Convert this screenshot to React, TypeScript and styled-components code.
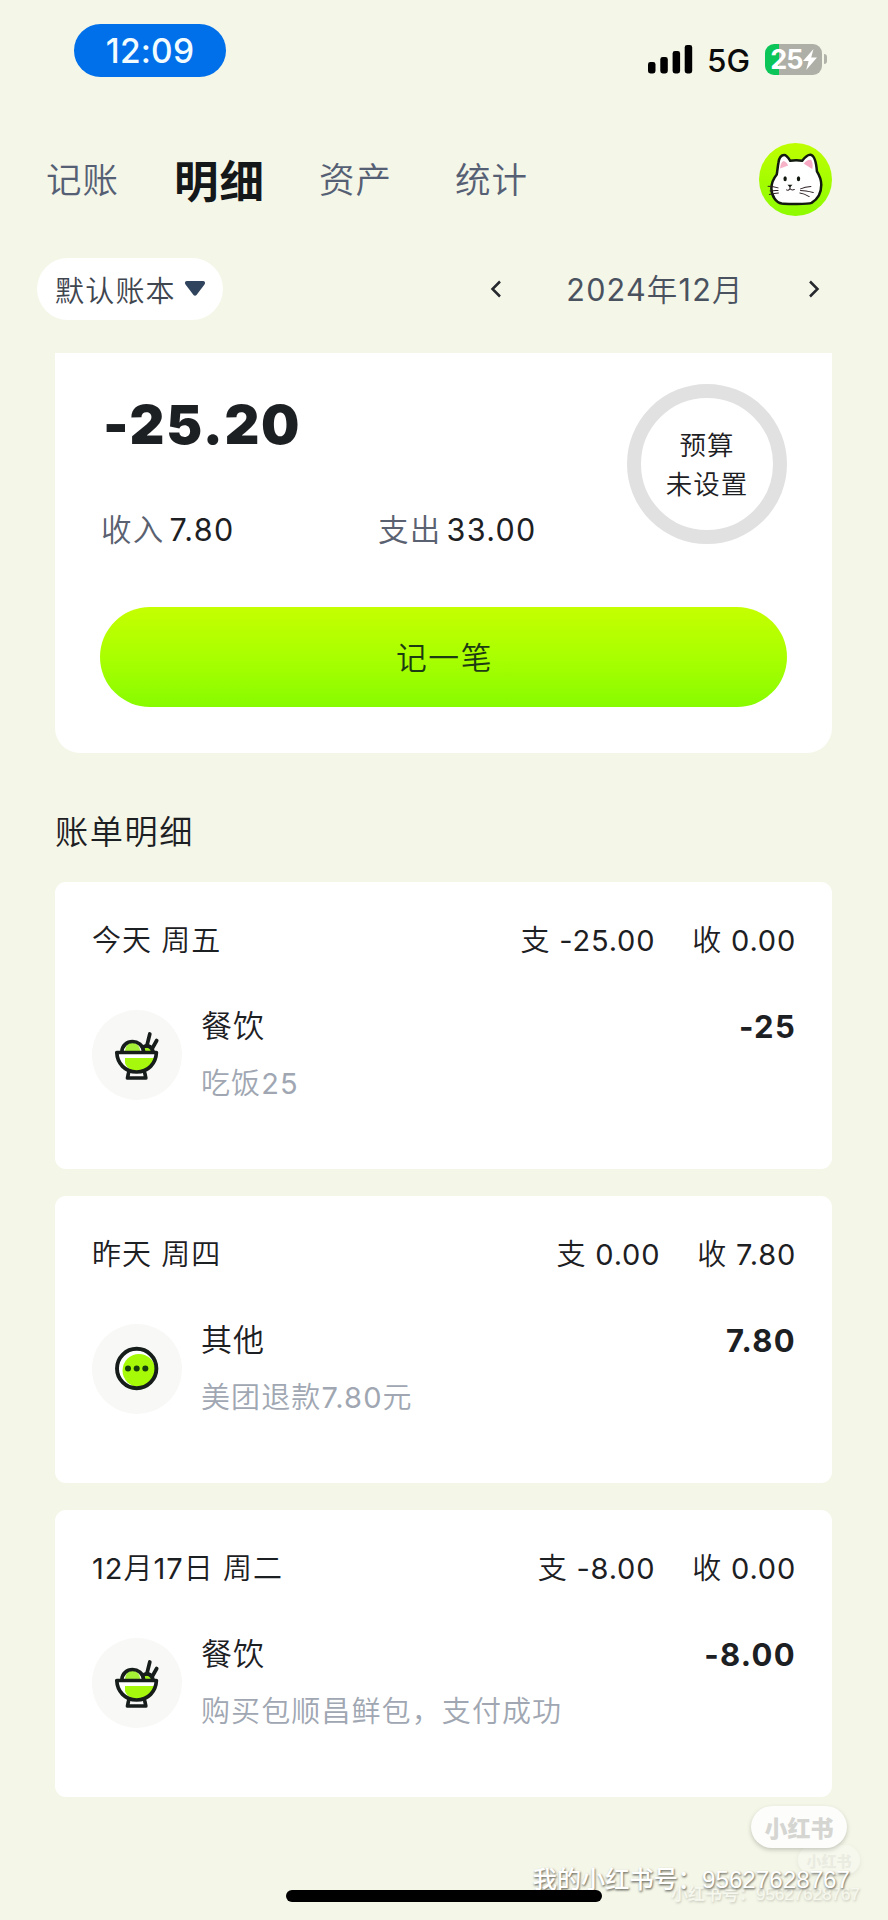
import React from "react";
import styled, { createGlobalStyle } from "styled-components";

const GlobalStyle = createGlobalStyle`
  *, *::before, *::after { box-sizing: border-box; }
  body {
    margin: 0;
    background: #f4f6e8;
    font-family: Inter, "Noto Sans CJK SC", sans-serif;
    color: #1d2023;
    -webkit-font-smoothing: antialiased;
  }
`;

const Screen = styled.div`
  position: relative;
  display: flex;
  flex-direction: column;
  width: 888px;
  height: 1920px;
  overflow: hidden;
  background: #f4f6e8;
`;

/* Latin figures are set one step heavier than the Chinese text around them. */
const Figure = styled.span`
  font-weight: 400;
`;

const Mixed = ({ children }: { children: string }) => (
  <>
    {children
      .split(/([-\d.]+)/)
      .filter(Boolean)
      .map((part, i) => (/^[-\d.]/.test(part) ? <Figure key={i}>{part}</Figure> : part))}
  </>
);

/* ---------- status bar ---------- */

const StatusBar = styled.header`
  display: flex;
  justify-content: space-between;
  align-items: flex-start;
  height: 143px;
  padding: 24px 61px 0 74px;
`;

const TimePill = styled.div`
  display: flex;
  align-items: center;
  justify-content: center;
  width: 152px;
  height: 53px;
  padding-top: 1px;
  border-radius: 27px;
  background: #0070ea;
  color: #f2fcff;
  font-size: 33.5px;
  font-weight: 500;
  letter-spacing: 0.2px;
`;

const StatusIcons = styled.div`
  display: flex;
  align-items: center;
  height: 32px;
  margin-top: 19px;
`;

const Network = styled.span`
  width: 57px;
  padding-left: 14px;
  padding-top: 3px;
  margin-right: 15px;
  color: #0b0b0b;
  font-size: 31.5px;
  font-weight: 500;
  line-height: 32px;
  white-space: nowrap;
`;

const Battery = styled.div`
  display: flex;
  align-items: center;
  gap: 2px;
`;

const BatteryBody = styled.div`
  display: flex;
  align-items: center;
  justify-content: center;
  width: 57px;
  height: 31px;
  border-radius: 9px;
  background: linear-gradient(90deg, #0bc558 0 14px, #aeafa7 14px);
  color: #fff;
  font-size: 27px;
  font-weight: 700;
  letter-spacing: -0.8px;
  line-height: 31px;
`;

const BatteryCap = styled.i`
  width: 3px;
  height: 10px;
  border-radius: 0 4px 4px 0;
  background: #b1b2aa;
`;

/* ---------- navigation ---------- */

const Nav = styled.nav`
  display: flex;
  align-items: center;
  height: 73px;
  padding: 0 56px 0 46px;
`;

const Tab = styled.a<{ $active?: boolean; $width: number }>`
  flex: 0 0 ${(p) => p.$width}px;
  padding-top: ${(p) => (p.$active ? 4 : 2)}px;
  color: ${(p) => (p.$active ? "#141819" : "#566074")};
  font-size: ${(p) => (p.$active ? 44.5 : 35.5)}px;
  font-weight: ${(p) => (p.$active ? 700 : 350)};
  letter-spacing: 1px;
  line-height: 72px;
  white-space: nowrap;
`;

const Avatar = styled.svg`
  width: 73px;
  height: 73px;
  margin-left: auto;
`;

const Filters = styled.div`
  display: flex;
  align-items: center;
  height: 62px;
  margin-top: 42px;
  padding: 0 68px 0 37px;
`;

const BookPicker = styled.button`
  display: flex;
  align-items: center;
  gap: 8px;
  width: 186px;
  height: 62px;
  padding: 0 0 1px 18px;
  border: 0;
  border-radius: 31px;
  background: #fff;
  color: #3f4650;
  font: inherit;
  font-size: 29px;
  font-weight: 350;
  letter-spacing: 1.2px;
  white-space: nowrap;
`;

const MonthSwitch = styled.div`
  display: flex;
  align-items: center;
  justify-content: space-between;
  width: 330px;
  margin-left: auto;
`;

const MonthLabel = styled.span`
  padding-bottom: 2px;
  color: #4a5260;
  font-size: 30.5px;
  font-weight: 350;
  letter-spacing: 1.2px;
  white-space: nowrap;
`;

/* ---------- summary ---------- */

const Summary = styled.section`
  height: 400px;
  margin: 33px 56px 0 55px;
  padding: 31px 45px 46px;
  border-radius: 0 0 25px 25px;
  background: #fff;
`;

const SummaryTop = styled.div`
  display: flex;
  justify-content: space-between;
  height: 223px;
`;

const Figures = styled.div`
  display: flex;
  flex-direction: column;
  padding-top: 14px;
`;

const Balance = styled.div`
  padding-left: 3px;
  font-size: 54px;
  font-weight: 900;
  letter-spacing: 1.6px;
  line-height: 54px;
`;

const Totals = styled.div`
  display: flex;
  margin-top: 53px;
  padding-left: 1px;
  line-height: 50px;
`;

const Total = styled.div<{ $width?: number }>`
  display: flex;
  width: ${(p) => (p.$width ? p.$width + "px" : "auto")};
  gap: 5px;
  font-size: 30.5px;
  font-weight: 350;
  letter-spacing: 1.3px;
  white-space: nowrap;
`;

const TotalLabel = styled.span`
  color: #5a6170;
`;

const BudgetRing = styled.div`
  display: flex;
  flex: none;
  flex-direction: column;
  align-items: center;
  justify-content: center;
  width: 160px;
  height: 160px;
  padding-top: 2px;
  border: 14px solid #e1e1e1;
  border-radius: 50%;
  font-size: 26.5px;
  font-weight: 350;
  letter-spacing: 1px;
  line-height: 39px;
  white-space: nowrap;
`;

const RecordButton = styled.button`
  display: block;
  width: 100%;
  height: 100px;
  padding: 0 0 3px 2px;
  border: 0;
  border-radius: 50px;
  background: linear-gradient(180deg, #c5ff00 0%, #a9ff00 50%, #88fb00 100%);
  color: #1c3b12;
  font: inherit;
  font-size: 30.8px;
  font-weight: 350;
  letter-spacing: 1.5px;
`;

/* ---------- records ---------- */

const SectionTitle = styled.h2`
  margin: 59px 0 30px 55px;
  font-size: 33.2px;
  font-weight: 350;
  letter-spacing: 1.6px;
  line-height: 40px;
`;

const RecordList = styled.main`
  display: flex;
  flex-direction: column;
  gap: 27px;
  margin: 0 56px 0 55px;
`;

const DayCard = styled.article`
  height: 287px;
  padding: 39px 36px 0 37px;
  border-radius: 11px;
  background: #fff;
`;

const DayHeader = styled.div`
  display: flex;
  justify-content: space-between;
  font-size: 29px;
  font-weight: 350;
  letter-spacing: 1px;
  line-height: 40px;
  white-space: nowrap;
`;

const DayTotals = styled.div`
  display: flex;
  gap: 37px;
  letter-spacing: 0.8px;
`;

const Entry = styled.div`
  display: flex;
  margin-top: 49px;
`;

const EntryIcon = styled.svg`
  flex: none;
  width: 90px;
  height: 90px;
  border-radius: 50%;
  background: #f8f9f6;
`;

const EntryText = styled.div`
  flex: 1;
  margin-left: 19px;
  margin-top: -4px;
`;

const EntryName = styled.div`
  font-size: 31px;
  font-weight: 350;
  letter-spacing: 0.9px;
  line-height: 40px;
`;

const EntryNote = styled.div`
  margin-top: 18px;
  color: #a0a7b2;
  font-size: 29px;
  font-weight: 350;
  letter-spacing: 1.1px;
  line-height: 40px;
`;

const Amount = styled.div`
  margin-top: -3px;
  font-size: 31px;
  font-weight: 700;
  letter-spacing: 1.3px;
  line-height: 40px;
`;

/* ---------- overlays ---------- */

const HomeIndicator = styled.div`
  position: absolute;
  left: 286px;
  bottom: 18px;
  width: 316px;
  height: 12px;
  border-radius: 6px;
  background: #000;
`;

const Watermark = styled.div<{ $faint?: boolean }>`
  position: absolute;
  right: ${(p) => (p.$faint ? 28 : 38)}px;
  bottom: ${(p) => (p.$faint ? 15 : 25)}px;
  display: flex;
  flex-direction: column;
  align-items: flex-end;
  opacity: ${(p) => (p.$faint ? 0.3 : 1)};
`;

const BrandPill = styled.div<{ $small?: boolean }>`
  display: flex;
  align-items: center;
  justify-content: center;
  width: ${(p) => (p.$small ? 62 : 96)}px;
  height: ${(p) => (p.$small ? 30 : 42)}px;
  margin-right: ${(p) => (p.$small ? 0 : 3)}px;
  border-radius: 21px;
  background: #fdfdfb;
  box-shadow: 0 2px 4px rgba(90, 90, 80, 0.3);
  color: #d5d5d2;
  font-size: ${(p) => (p.$small ? 15 : 23)}px;
  font-weight: 900;
`;

const BrandId = styled.div<{ $small?: boolean }>`
  margin-top: ${(p) => (p.$small ? 10 : 17)}px;
  color: #fff;
  font-family: "Liberation Sans", "Noto Sans CJK SC", sans-serif;
  font-size: ${(p) => (p.$small ? 17 : 24.2)}px;
  font-weight: 500;
  line-height: ${(p) => (p.$small ? 20 : 30)}px;
  text-shadow: 1px 1px 2px rgba(90, 90, 80, 0.75), 0 2px 2px rgba(90, 90, 80, 0.35);
  white-space: nowrap;
`;

/* ---------- drawings ---------- */

const SignalIcon = () => (
  <svg width="45" height="29" viewBox="0 0 45 29" fill="#000">
    <rect x="0" y="17" width="7.5" height="11.5" rx="2.4" />
    <rect x="12.3" y="12" width="7.5" height="16.5" rx="2.4" />
    <rect x="24.6" y="6" width="7.5" height="22.5" rx="2.4" />
    <rect x="36.7" y="0" width="7.5" height="28.5" rx="2.4" />
  </svg>
);

const BoltIcon = () => (
  <svg width="14" height="21" viewBox="0 0 14 21" fill="#fff">
    <path d="M10.5 0 0 12h5.6L3.2 21 14 8.6H8.2z" />
  </svg>
);

const CatAvatar = () => (
  <Avatar viewBox="30 25 218 218">
    <defs>
      <linearGradient id="avatarFill" x1="0" y1="0" x2="0" y2="1">
        <stop offset="0" stopColor="#beff00" />
        <stop offset="1" stopColor="#8dfa00" />
      </linearGradient>
    </defs>
    <circle cx="139" cy="134" r="109" fill="url(#avatarFill)" />
    <path
      d="M88 84C90 70 97 61 105 61C113 61 118 70 123 78C135 76 147 76 159 78C165 70 175 59 184 60C197 62 201 84 203 110C211 123 216 136 216 150C216 174 204 194 187 204C176 208 112 208 98 206C81 203 67 183 67 161C67 145 74 130 83 119C85 107 86 95 88 84Z"
      fill="#fff"
      stroke="#12190f"
      strokeWidth="7.5"
      strokeLinejoin="round"
    />
    <path d="M93 101C94 88 99 79 104 79C110 81 115 87 117 92Z" fill="#f6b3c8" />
    <path d="M164 87C170 78 180 73 186 76C191 83 191 95 189 103Z" fill="#f7a9c3" />
    <ellipse cx="108" cy="132" rx="5" ry="7.500" fill="#12190f" />
    <ellipse cx="148" cy="132" rx="5" ry="7.500" fill="#12190f" />
    <path d="M115 150h15l-7.500 8z" fill="#12190f" />
    <path
      d="M122.500 156v6M112 165c5 2 9 0 10.500-4 3 4 8 5 13 3M57 154c10 0 22 2 30 5M63 168c8-1 16-2 24-1M61 179c9-3 19-5 27-5M154 162c10-4 20-6 31-7M154 167c13 0 26 3 38 6M152 174c10 1 20 6 28 11"
      fill="none"
      stroke="#2c2023"
      strokeWidth="3"
      strokeLinecap="round"
    />
  </Avatar>
);

const BowlIcon = () => (
  <EntryIcon viewBox="0 0 90 90">
    <path d="M33 41c1-7 5-9 9-8 4 1 6 4 6 8z" fill="#a4ee35" />
    <path d="M51 41c0-5 7-5 9 0z" fill="#9ff01a" />
    <path d="M25 43.500h39C62 55 54 61 44 61S27 55 25 43.500z" fill="#fff" />
    <path d="M33 48h30c-2 8-9 13-18 13-6 0-11-4-12-8z" fill="#a6f80c" />
    <g fill="none" stroke="#161d1b" strokeWidth="3.700" strokeLinecap="round" strokeLinejoin="round">
      <path d="M24.800 42.500h39.600C64 53.500 56 62 44.600 62S25.200 53.500 24.800 42.500z" />
      <path d="M29.800 42C30 35.500 35 31.500 40.500 31.500S51 35.500 51.500 41" />
      <path d="M50.500 37.500c4-3 9-2 10.500 4" />
      <path d="M57.800 24 54.800 36M64.700 30.500 60.500 38" />
      <path d="M36.500 63 35.500 68h18.300L52.800 63" />
    </g>
  </EntryIcon>
);

const MoreIcon = () => (
  <EntryIcon viewBox="0 0 90 90">
    <circle cx="44.700" cy="44.500" r="19.700" fill="#fff" />
    <circle cx="47" cy="46.500" r="16.500" fill="#a6fa08" />
    <circle cx="44.700" cy="44.500" r="19.700" fill="none" stroke="#161d1b" strokeWidth="3.900" />
    <g fill="#17420c">
      <circle cx="36" cy="44.500" r="3" />
      <circle cx="44.700" cy="44.500" r="3" />
      <circle cx="53.300" cy="44.500" r="3" />
    </g>
  </EntryIcon>
);

const CaretIcon = () => (
  <svg width="22" height="17" viewBox="0 0 22 17">
    <path
      d="M3 1h16c2 0 2.700 2 1.500 3.500l-8 10.500c-.8 1-2.200 1-3 0l-8-10.500C.3 3 1 1 3 1z"
      fill="#31445d"
    />
  </svg>
);

const Chevron = ({ flip }: { flip?: boolean }) => (
  <svg width="12" height="18" viewBox="0 0 12 18">
    <path
      d={flip ? "M2 1.500 9.500 9 2 16.500" : "M10 1.500 2.500 9l7.500 7.500"}
      fill="none"
      stroke="#25282c"
      strokeWidth="2.500"
    />
  </svg>
);

/* ---------- data ---------- */

const tabs = [
  { label: "记账", width: 128 },
  { label: "明细", width: 145, active: true },
  { label: "资产", width: 136 },
  { label: "统计", width: 90 },
];

const days = [
  { date: "今天 周五", out: "-25.00", income: "0.00", name: "餐饮", note: "吃饭25", amount: "-25", icon: BowlIcon },
  { date: "昨天 周四", out: "0.00", income: "7.80", name: "其他", note: "美团退款7.80元", amount: "7.80", icon: MoreIcon },
  { date: "12月17日 周二", out: "-8.00", income: "0.00", name: "餐饮", note: "购买包顺昌鲜包，支付成功", amount: "-8.00", icon: BowlIcon },
];

export default function App() {
  return (
    <Screen>
      <GlobalStyle />
      <StatusBar>
        <TimePill>12:09</TimePill>
        <StatusIcons>
          <SignalIcon />
          <Network>5G</Network>
          <Battery>
            <BatteryBody>
              25
              <BoltIcon />
            </BatteryBody>
            <BatteryCap />
          </Battery>
        </StatusIcons>
      </StatusBar>

      <Nav>
        {tabs.map((t) => (
          <Tab key={t.label} $active={t.active} $width={t.width}>
            {t.label}
          </Tab>
        ))}
        <CatAvatar />
      </Nav>

      <Filters>
        <BookPicker>
          默认账本
          <CaretIcon />
        </BookPicker>
        <MonthSwitch>
          <Chevron />
          <MonthLabel>
            <Mixed>2024年12月</Mixed>
          </MonthLabel>
          <Chevron flip />
        </MonthSwitch>
      </Filters>

      <Summary>
        <SummaryTop>
          <Figures>
            <Balance>-25.20</Balance>
            <Totals>
              <Total $width={277}>
                <TotalLabel>收入</TotalLabel>
                <Figure>7.80</Figure>
              </Total>
              <Total>
                <TotalLabel>支出</TotalLabel>
                <Figure>33.00</Figure>
              </Total>
            </Totals>
          </Figures>
          <BudgetRing>
            <span>预算</span>
            <span>未设置</span>
          </BudgetRing>
        </SummaryTop>
        <RecordButton>记一笔</RecordButton>
      </Summary>

      <SectionTitle>账单明细</SectionTitle>
      <RecordList>
        {days.map((d) => (
          <DayCard key={d.date}>
            <DayHeader>
              <span>
                <Mixed>{d.date}</Mixed>
              </span>
              <DayTotals>
                <span>
                  <Mixed>{`支 ${d.out}`}</Mixed>
                </span>
                <span>
                  <Mixed>{`收 ${d.income}`}</Mixed>
                </span>
              </DayTotals>
            </DayHeader>
            <Entry>
              <d.icon />
              <EntryText>
                <EntryName>{d.name}</EntryName>
                <EntryNote>
                  <Mixed>{d.note}</Mixed>
                </EntryNote>
              </EntryText>
              <Amount>{d.amount}</Amount>
            </Entry>
          </DayCard>
        ))}
      </RecordList>

      <Watermark $faint>
        <BrandPill $small>小红书</BrandPill>
        <BrandId $small>小红书号：95627628767</BrandId>
      </Watermark>
      <Watermark>
        <BrandPill>小红书</BrandPill>
        <BrandId>我的小红书号：95627628767</BrandId>
      </Watermark>
      <HomeIndicator />
    </Screen>
  );
}
